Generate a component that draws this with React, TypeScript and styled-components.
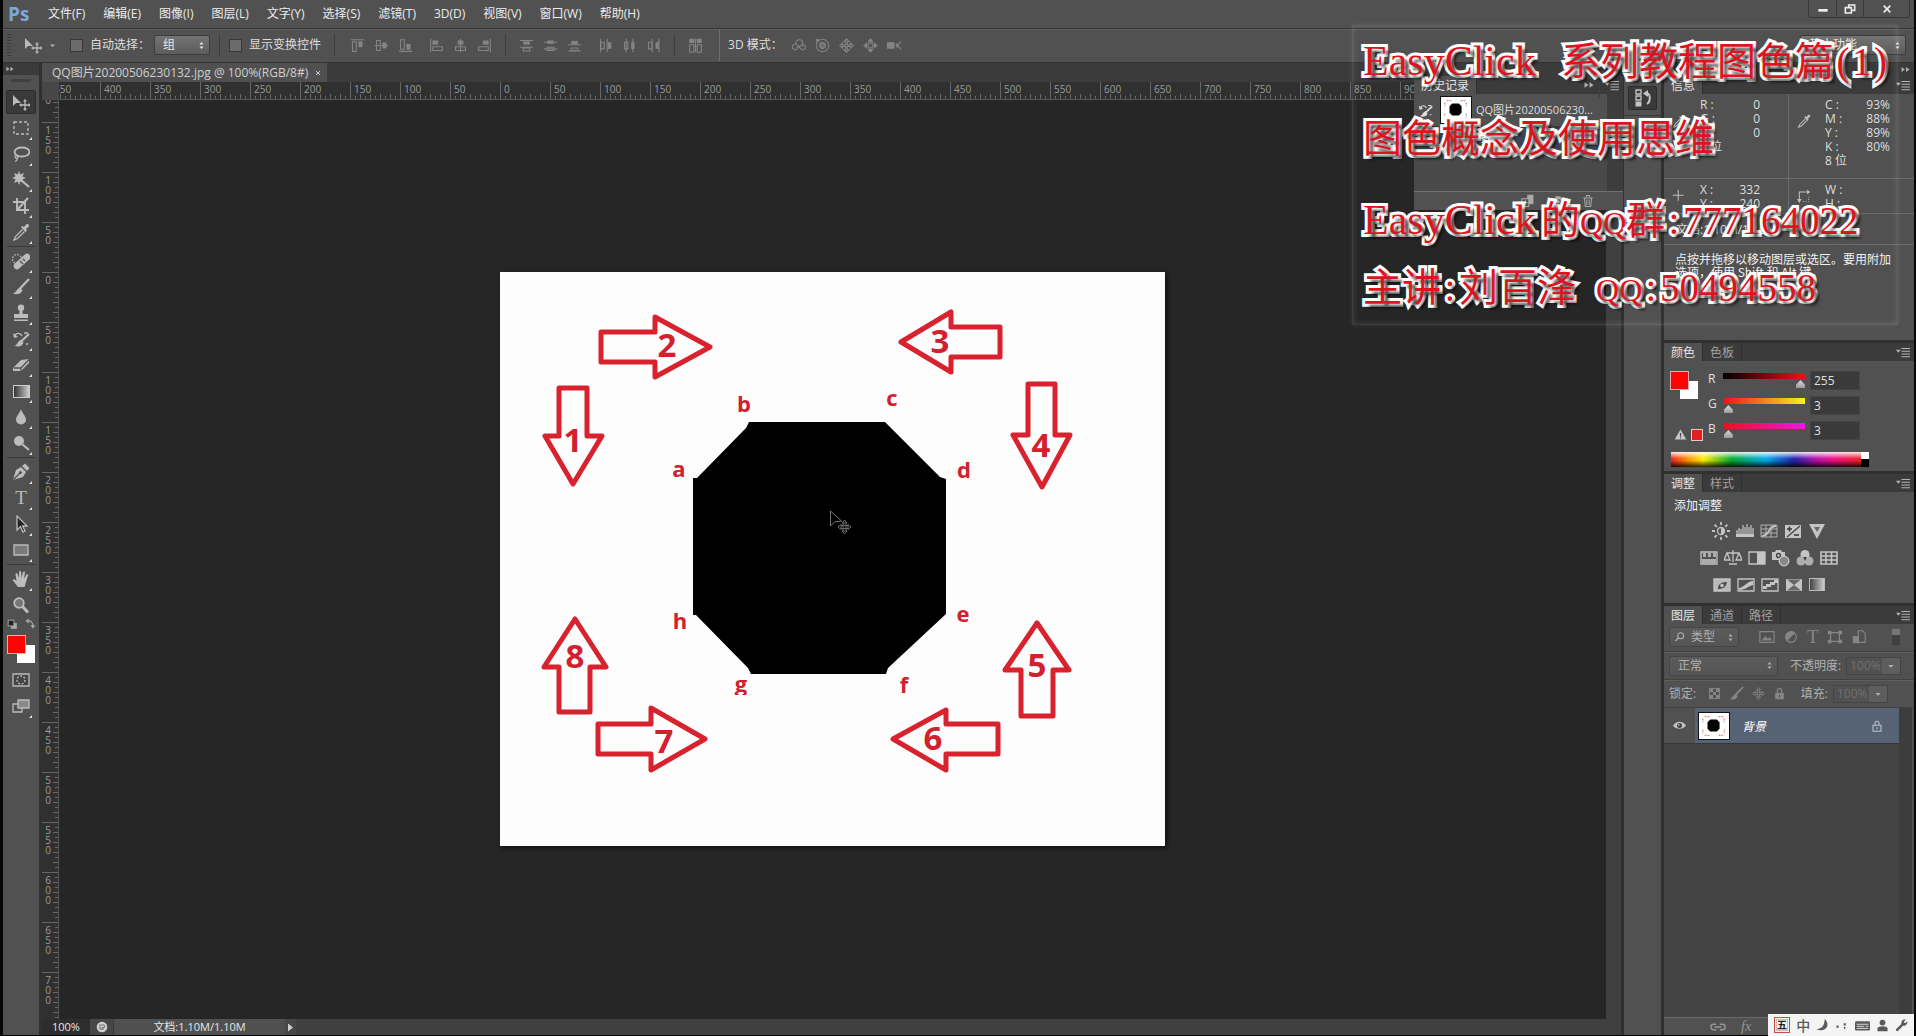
import React from "react";
import styled, { createGlobalStyle, css } from "styled-components";

const UI_FONT = '"Open Sans", "Noto Sans CJK SC", sans-serif';
const HINT_FONT = '"Noto Sans CJK SC", sans-serif';
const TITLE_FONT = '"Liberation Serif", "Noto Sans CJK SC", serif';

const c = {
  panel: "#515151",
  strip: "#3b3b3b",
  gap: "#303030",
  canvas: "#262626",
  text: "#dedede",
  red: "#ff0303",
};

const Global = createGlobalStyle`
  *, *::before, *::after { box-sizing: border-box; }
  body { margin: 0; background: #000; overflow: hidden; }
  button, input, select { font: inherit; color: inherit; margin: 0; padding: 0; border: 0; background: none; border-radius: 0; outline: none; }
`;

const Window = styled.div`
  display: flex;
  flex-direction: column;
  height: 100vh;
  border: solid #060606;
  border-width: 0 2px 1px 3px;
  background: ${c.gap};
  color: ${c.text};
  font: 12px/16px ${UI_FONT};
`;

/* ---------- icons ---------- */

const Glyph = styled.svg<{ $s?: number }>`
  display: block;
  flex: none;
  width: ${(p) => p.$s ?? 18}px;
  height: ${(p) => p.$s ?? 18}px;
  fill: none;
  stroke: currentColor;
  stroke-width: 1.3;
`;

const f = { fill: "currentColor", stroke: "none" };

const shapes: Record<string, React.ReactNode> = {
  move: (
    <>
      <path {...f} d="M1 2v11l3-3h5z" />
      <path d="M13 7.500v9M8.500 12h9" />
      <path {...f} d="M13 6l-2 2.500h4zM13 18l-2-2.500h4zM7 12l2.500-2v4zM19 12l-2.500-2v4z" />
    </>
  ),
  marquee: <path d="M2 3h14v12H2z" strokeDasharray="3 2" />,
  lasso: (
    <>
      <ellipse cx="10" cy="7" rx="7.500" ry="4.500" strokeWidth="1.800" />
      <path d="M4 10c-2 1-1 3.500 1 3s1-2.500-.5-2.500M5 13c.5 2-.5 3-2 3.500" />
    </>
  ),
  wand: (
    <>
      <path d="M9 9l8 7" strokeWidth="2.200" />
      <path {...f} d="M7 0l1.300 3.500L12 2l-1.500 3.500L14 7l-3.500 1.300L12 12 8.300 10.500 7 14 5.700 10.500 2 12l1.500-3.700L0 7l3.500-1.500L2 2l3.700 1.500z" />
    </>
  ),
  crop: <path d="M5 1v12h12M1 5h12v12M16 1L6 12" strokeWidth="1.900" />,
  dropper: (
    <>
      <path d="M10.500 6.500l-7 7L2 17l3.500-1.500 7-7" />
      <path {...f} d="M9 4l1.500-1 1.500 1 2-2.500c2-1.500 4 .5 2.500 2.500L14 6l1 1.500L13.500 9z" />
    </>
  ),
  heal: (
    <>
      <circle cx="5" cy="7" r="4.500" strokeDasharray="1.500 1.500" />
      <path d="M5 14l10-9" strokeWidth="6.500" strokeLinecap="round" />
      <path d="M8 9l3 3M11 7l2 2" stroke="#555" strokeWidth="1.500" />
    </>
  ),
  brush: (
    <>
      <path d="M17 1L8 10.500" strokeWidth="2.200" />
      <path {...f} d="M8 9.500l2.500 2.500c-1 4-5 5-10 3.500 4-.5 3.500-4.500 7.500-6z" />
    </>
  ),
  stamp: (
    <>
      <circle {...f} cx="9" cy="3.800" r="3.200" />
      <path {...f} d="M7.800 5h2.400l.5 5H16v4H2v-4h5.300zM2 15.500h14V17H2z" />
    </>
  ),
  history: (
    <>
      <path d="M17 4L9 11.500" strokeWidth="2.200" />
      <path {...f} d="M9 10l2.500 2.500c-1 4-5 4.500-9 3.500 3-1 3-5 6.500-6z" />
      <path d="M3 6c1-4 6-3 7 0M12 3h4M14 14h2" />
      <path {...f} d="M1 3l1 5 4-1z" />
    </>
  ),
  eraser: (
    <>
      <path {...f} d="M1 12l8-8 8-1v4l-8 8H1z" />
      <path d="M1.500 12H9l8-8.500M9 12v3" stroke="#555" />
    </>
  ),
  drop: <path {...f} d="M9 1c1 4 5 7 5 10.500a5 5 0 01-10 0C4 8 8 5 9 1z" />,
  dodge: (
    <>
      <circle {...f} cx="7" cy="7" r="5" />
      <path d="M10.500 10.500L17 16" strokeWidth="2.200" />
    </>
  ),
  pen: (
    <>
      <path {...f} d="M1 17l3-10 5-3 5 5-3 5z" />
      <path {...f} d="M10 3l3-2.500L17.500 5 15 8z" />
      <path d="M1.500 16.500L8 10" stroke="#515151" />
      <circle cx="8.500" cy="9.500" r="1.500" fill="#515151" stroke="none" />
    </>
  ),
  pointer: <path d="M5 1v14l3.500-3.500L11 17l2-1-2.300-5H15z" fill="#222" />,
  hand: (
    <path {...f} d="M6 17c-2-3-4-5-5.500-7 1-1.500 2.500-.5 4 1L3.500 4c.5-1.500 1.500-1 2 0L7 8V2c.5-1.500 2-1.500 2.200 0L9.500 8l1.500-6c.7-1 2-.7 2 .5L12 8.500l2.500-4c1-.8 2-.2 1.500 1L14 12l-1.500 5z" />
  ),
  zoom: (
    <>
      <circle cx="7" cy="7" r="4.800" fill="#777" strokeWidth="1.800" />
      <path d="M10.500 10.500L16 16.500" strokeWidth="3" />
    </>
  ),
  quick: (
    <>
      <path d="M1 3h16v12H1z" fill="#444" />
      <circle cx="9" cy="9" r="4" strokeDasharray="2 1.500" />
    </>
  ),
  screen: (
    <>
      <path d="M1 7h9v8H1z" />
      <path d="M6 3h11v8H6z" fill="#8a8a8a" />
    </>
  ),
  miniswatch: (
    <>
      <path {...f} d="M7 7h8v8H7z" />
      <path d="M3 3h8v8H3z" fill="#222" />
    </>
  ),
  swap: (
    <>
      <path d="M4 5c5-1 9 2 9 8" strokeWidth="2" />
      <path {...f} d="M6 1v8L1 5zM9 12h8l-4 5z" />
    </>
  ),
  alTop: (<><path d="M1 2h16M3 4.500h4.500V16H3z" /><path {...f} d="M10 4h5v7h-5z" /></>),
  alMid: (<><path d="M1 9h16M3 3h4.500v12H3z" /><path {...f} d="M10 5.500h5v7h-5z" /></>),
  alBot: (<><path d="M1 16h16M3 2h4.500v11.500H3z" /><path {...f} d="M10 7h5v7h-5z" /></>),
  alLeft: (<><path d="M2 1v16M4.500 10.500H16V15H4.500z" /><path {...f} d="M4 3h7v5H4z" /></>),
  alCen: (<><path d="M9 1v16M3 10.500h12V15H3z" /><path {...f} d="M5.500 3h7v5h-7z" /></>),
  alRight: (<><path d="M16 1v16M2 10.500h11.500V15H2z" /><path {...f} d="M7 3h7v5H7z" /></>),
  diTop: (<><path d="M1 3h16M1 11h16M5 12h8v3.500H5z" /><path {...f} d="M5 4h8v4H5z" /></>),
  diMid: (<><path d="M1 5h16M1 13h16M5 11h8v4H5z" /><path {...f} d="M5 3h8v4H5z" /></>),
  diBot: (<><path d="M1 8h16M1 15.500h16M5 12h8v3H5z" /><path {...f} d="M5 3.500h8V8H5z" /></>),
  diLeft: (<><path d="M3 1v16M11 1v16M3.500 5h4v8h-4z" /><path {...f} d="M12 5h4v8h-4z" /></>),
  diCen: (<><path d="M5 1v16M13 1v16M3 5h4v8H3z" /><path {...f} d="M11 5h4v8h-4z" /></>),
  diRight: (<><path d="M7.500 1v16M15.500 1v16M3 5h4v8H3z" /><path {...f} d="M11.500 5h4v8h-4z" /></>),
  arrange: (<><path d="M2 8h5v9H2zM11 8h5v9h-5zM9 1v16" /><path {...f} d="M1.500 1h6v5h-6zM10.500 1h6v5h-6z" /></>),
  orbit: (<><circle cx="10" cy="6" r="4" /><path d="M6 7c-6 1-6 7 0 7l3-4c3 5 7 5 8 2s-1-4-4-4" /></>),
  roll: (<><circle cx="9" cy="9" r="7.500" /><circle cx="9" cy="9" r="3.500" fill="#707070" /><path {...f} d="M1 1l5 1-4 4z" /></>),
  pan: <path d="M9 1l3 3h-2v4h4V6l3 3-3 3v-2h-4v4h2l-3 3-3-3h2v-4H4v2L1 9l3-3v2h4V4H6z" />,
  slide: (<><path {...f} d="M9 0l4 5H5zM0 9l5-4v8zM18 9l-5-4v8zM9 18l-4-5h8z" /><circle cx="9" cy="9" r="3" /></>),
  camera: (<><path {...f} d="M0 5h9v8H0zM10 9l3-4v8z" /><path d="M17 4l-4 5 4 5" /></>),
  snap: (<><path {...f} d="M1 5h4l1-2h6l1 2h4v10H1z" /><circle cx="9" cy="10" r="3" stroke="#555" /></>),
  trash: <path d="M3 5h12M7 4V2h4v2M4.500 5l1 11h7l1-11M7.500 7v7M10.500 7v7" />,
  newdoc: (<><path {...f} d="M8 1h8v12H8z" /><path d="M1 6h9v10H1z" fill="#555" /><path d="M3 11h5M5.500 8.500v5" stroke="#ddd" /></>),
  histPanel: (<><path d="M2 1h5v4H2zM2 7h5v4H2z" /><path {...f} d="M1.500 12.500h6v5h-6z" /><path d="M11 4c6-1 6 8 2 11" strokeWidth="2" /><path {...f} d="M14 1v7L9 4.500z" /></>),
  cross: <path d="M8 1v14M1 8h14" />,
  dims: (<><path d="M3 17V4h10" /><path {...f} d="M13 1l4 3-4 3zM0 13h6l-3 5z" /><path d="M8 16h7V9" strokeDasharray="1 2" /></>),
  sun: (<><circle cx="9" cy="9" r="3.500" /><path {...f} d="M9 5.500a3.500 3.500 0 010 7z" /><path d="M9 0v3M9 15v3M0 9h3M15 9h3M2.600 2.600l2.200 2.200M13.200 13.200l2.200 2.200M2.600 15.400l2.200-2.200M13.200 4.800l2.200-2.200" strokeWidth="1.800" /></>),
  levels: (<><path {...f} d="M0 12h18v3H0z" /><path d="M1 13V8M3 13V6M5 13V7M7 13V3M9 13V5M11 13V2M13 13V5M15 13V3M17 13V6" strokeWidth="1.200" /></>),
  curves: (<><path d="M1 3h16v12H1zM6 3v12M11 3v12M1 7h16M1 11h16" strokeWidth=".8" /><path d="M2 14c8 0 6-10 14-10" strokeWidth="1.800" /></>),
  exposure: (<><path {...f} d="M1 3h16v13H1z" /><path d="M16 4L3 15" stroke="#444" /><path d="M3 7h5M5.500 4.500v5M10 13h5" stroke="#333" /></>),
  vibrance: (<><path {...f} d="M1 2h16L9 17z" /><path d="M6 5h6l-3 5z" fill="#666" stroke="none" /></>),
  hue: (<><path d="M1 3h16v12H1z" /><path {...f} d="M3 4h3v4H3zM8 4h3v4H8zM13 4h3v4h-3zM2 10h14v4H2z" opacity=".8" /></>),
  balance: <path d="M9 1v12M5 15h8M3 4h12M3 4L0 11h6zM15 4l-3 7h6z" />,
  bw: (<><path d="M1 3h16v12H1z" /><path {...f} d="M9 3h8v12H9z" /></>),
  photo: (<><path {...f} d="M0 3h3l1-2h5l1 2h3v8H0z" /><circle cx="6.500" cy="6.500" r="2" stroke="#444" /><circle cx="12" cy="12" r="4.800" fill="#888" /></>),
  mixer: (<><circle {...f} cx="9" cy="5.500" r="4.500" /><circle {...f} cx="5" cy="12" r="4.500" opacity=".8" /><circle {...f} cx="13" cy="12" r="4.500" opacity=".8" /><path d="M7 8h4l-2 4z" fill="#444" stroke="none" /></>),
  lookup: <path d="M1 3h16v12H1zM6 3v12M11.500 3v12M1 7h16M1 11h16" strokeWidth="1.600" />,
  invert: (<><path d="M1 3h16v12H1z" fill="#b8b8b8" /><path d="M5 13c0-5 3-7 9-7-1 5-4 7-9 7z" fill="#4a4a4a" stroke="none" /><circle cx="9" cy="9.500" r="1.800" fill="#c4c4c4" stroke="none" /></>),
  poster: (<><path d="M1 3h16v12H1z" /><path {...f} d="M2 12C8 11 10 5 16 5v4c-5 1-7 5-14 5z" /></>),
  thresh: (<><path d="M1 3h16v12H1z" /><path {...f} d="M2 13v-3h3V8h4V6h4V4h4v3h-3v2h-4v2H6v2z" /></>),
  selcol: (<><path {...f} d="M1 3h16v12H1z" /><path d="M2 3.500l7 5.500 7-5.500zM2 14.500L9 9l7 5.500z" fill="#666" stroke="none" /></>),
  image: (<><path d="M1 3h16v12H1z" /><path {...f} d="M3 13l4-5 3 3 2-2 3 4z" /></>),
  half: (<><circle cx="9" cy="9" r="6" /><path {...f} d="M4.500 13.500a6 6 0 019-9z" /></>),
  shape: (<><path d="M4 4h10v10H4z" /><path {...f} d="M1 2h4v4H1zM13 2h4v4h-4zM1 12h4v4H1zM13 12h4v4h-4z" /></>),
  smart: (<><path d="M8 2h5l3 3v10H8z" /><path {...f} d="M2 8h7v8H2z" /></>),
  check: (<><path d="M2 2h14v14H2z" /><path {...f} d="M2 2h5v5H2zM11 2h5v5h-5zM7 7h4v4H7zM2 11h5v5H2zM11 11h5v5h-5z" /></>),
  lock: (<><path {...f} d="M3 8h12v9H3z" /><path d="M6 8V5c0-4 6-4 6 0v3" strokeWidth="1.800" /><path d="M9 11v3" stroke="#444" /></>),
  lockLine: (<path d="M3 8h12v9H3zM6 8V5c0-4 6-4 6 0v3M9 11v3" strokeWidth="1.600" />),
  eye: (<><path {...f} d="M0 9c4-7 14-7 18 0-4 6-14 6-18 0z" /><circle cx="9" cy="9" r="3.500" fill="#444" stroke="none" /><circle {...f} cx="8" cy="8" r="1.200" /></>),
  search: (<><circle cx="10" cy="7" r="4.500" strokeWidth="1.600" /><path d="M6.500 10.500L2 15" strokeWidth="1.800" /></>),
  link: <path d="M7 6H4a3 3 0 000 6h3M11 6h3a3 3 0 010 6h-3M5 9h8" strokeWidth="1.600" />,
  warn: (<><path {...f} d="M9 2l8 14H1z" /><path d="M9 7v5M9 13v1.500" stroke="#444" strokeWidth="1.600" /></>),
  updown: <path {...f} d="M9 2l4 5H5zM9 16l4-5H5z" />,
  down: <path {...f} d="M4 7h10l-5 5z" />,
  ff: <path {...f} d="M1 4l7 5-7 5zM10 4l7 5-7 5z" />,
  menu: (<><path {...f} d="M0 6h6L3 10z" /><path d="M7 4.500h11M7 8h11M7 11.500h11M7 15h11" /></>),
  min: <path d="M2 11h14" strokeWidth="4" />,
  restore: <path d="M7 6V3h9v8h-4M2 7h9v8H2z" strokeWidth="2.400" />,
  close: <path d="M3 3l12 12M15 3L3 15" strokeWidth="3" />,
  moon: <path {...f} d="M12 0c9 8 1 20-12 14 9 0 12-6 12-14z" />,
  dots: <path {...f} d="M2 9h3v3H2zM12 6h3v3h-3zM12 11h3l-2 4z" />,
  keyboard: (<><rect {...f} x="0" y="4" width="18" height="11" rx="1.500" /><path d="M2 7.500h14M2 10h9M13 10h3M2 12.500h14" stroke="#eee" strokeWidth="1" /></>),
  person: (<><circle {...f} cx="9" cy="5" r="4" /><path {...f} d="M2 17v-4c0-4 14-4 14 0v4z" /></>),
  wrench: (<><path d="M3 15l8-8" strokeWidth="3.500" strokeLinecap="round" /><path {...f} d="M9 7c-1-4 2-7 6-6l-3 3 2 2 3-3c1 4-3 7-6 6z" /></>),
  status: (<><circle {...f} cx="9" cy="9" r="8" /><path d="M6 5v7h6M8 6h3c3 0 3 4 0 4H9" stroke="#555" /></>),
  play: <path {...f} d="M4 1l10 8-10 8z" />,
  rect: <path d="M2 4h14v10H2z" fill="#7a7a7a" />,
};

const Icon = ({ n, s }: { n: string; s?: number }) => (
  <Glyph viewBox="0 0 18 18" $s={s} aria-hidden="true">
    {shapes[n]}
  </Glyph>
);

/* ---------- menu bar ---------- */

const MenuBar = styled.header`
  display: flex;
  align-items: center;
  height: 29px;
  flex: none;
  background: ${c.panel};
  border-bottom: 1px solid #333;
`;
const Logo = styled.div`
  width: 45px;
  padding-left: 5px;
  color: #7ba7d9;
  font: bold 19px/26px "Open Sans", sans-serif;
`;
const Menus = styled.nav`
  display: flex;
  gap: 18px;
  flex: 1;
`;
const MenuItem = styled.button`
  color: #ececec;
  white-space: nowrap;
`;
const Caption = styled.div`
  display: flex;
  align-self: flex-start;
  height: 18px;
  margin-right: 4px;
  border: 1px solid #3a3a3a;
  border-top: 0;
  border-radius: 0 0 3px 3px;
`;
const CaptionButton = styled.button<{ $wide?: boolean }>`
  display: grid;
  place-items: center;
  width: ${(p) => (p.$wide ? 46 : 27)}px;
  color: #eee;
  & + & {
    border-left: 1px solid #3a3a3a;
  }
`;

/* ---------- options bar ---------- */

const OptionsBar = styled.div`
  display: flex;
  align-items: center;
  height: 34px;
  flex: none;
  padding: 0 8px 2px 4px;
  background: ${c.panel};
  border-top: 1px solid #606060;
  border-bottom: 1px solid #333;
`;
const Grip = styled.div`
  width: 4px;
  height: 22px;
  background: repeating-linear-gradient(#3a3a3a 0 1px, transparent 1px 3px);
`;
const ToolPreset = styled.button`
  display: flex;
  align-items: center;
  gap: 6px;
  width: 53px;
  margin-right: 2px;
  padding-left: 13px;
  color: #b8b8b8;
`;
const Divider = styled.div<{ $full?: boolean }>`
  width: 1px;
  height: ${(p) => (p.$full ? 32 : 22)}px;
  margin: 0 ${(p) => (p.$full ? 8 : 5)}px;
  background: ${(p) => (p.$full ? "#6e6e6e" : "#3e3e3e")};
`;
const CheckLabel = styled.label`
  display: flex;
  align-items: center;
  gap: 7px;
  margin: 0 4px;
  white-space: nowrap;
`;
const Check = styled.input`
  appearance: none;
  width: 13px;
  height: 13px;
  border: 1px solid #383838;
  background: #6b6b6b;
`;
const SelectBox = styled.span<{ $w: number; $dim?: boolean }>`
  display: grid;
  flex: none;
  align-items: center;
  width: ${(p) => p.$w}px;
  height: 20px;
  border: 1px solid ${(p) => (p.$dim ? "#454545" : "#3c3c3c")};
  border-radius: 2px;
  background: linear-gradient(${(p) => (p.$dim ? "#5c5c5c, #545454" : "#747474, #5c5c5c")});
  color: ${(p) => (p.$dim ? "#b0b0b0" : "#e8e8e8")};
  > * {
    grid-area: 1 / 1;
  }
  > svg:first-child {
    margin-left: 4px;
  }
  > svg:last-child {
    justify-self: end;
    margin-right: 3px;
    pointer-events: none;
  }
`;
const Select = styled.select<{ $pad?: number }>`
  appearance: none;
  width: 100%;
  height: 18px;
  padding-left: ${(p) => p.$pad ?? 8}px;
`;
const Drop = ({ w, label, value, dim, pad, icon }: { w: number; label: string; value: string; dim?: boolean; pad?: number; icon?: string }) => (
  <SelectBox $w={w} $dim={dim}>
    {icon && <Icon n={icon} s={12} />}
    <Select aria-label={label} $pad={pad}>
      <option>{value}</option>
    </Select>
    <Icon n="updown" s={9} />
  </SelectBox>
);
const IconGroup = styled.div`
  display: flex;
  align-items: center;
  gap: 9px;
  margin: 0 8px;
  color: #848484;
`;
const EyeCell = styled.div`
  display: grid;
  place-items: center;
`;
const IconButton = styled.button`
  display: grid;
  place-items: center;
`;
const Spacer = styled.div<{ $w?: number }>`
  flex: ${(p) => (p.$w ? `0 0 ${p.$w}px` : "1")};
`;

/* ---------- workspace ---------- */

const Workspace = styled.main`
  display: flex;
  gap: 3px;
  flex: 1;
  min-height: 0;
`;
const Tools = styled.aside`
  display: flex;
  flex-direction: column;
  align-items: center;
  width: 36px;
  background: ${c.panel};
`;
const ToolsHead = styled.div`
  align-self: stretch;
  height: 12px;
  padding: 2px 3px;
  background: ${c.strip};
  color: #b0b0b0;
`;
const ToolsGrip = styled.div`
  width: 20px;
  height: 3px;
  margin: 4px 0 7px;
  background: #404040;
`;
const Tool = styled.button<{ $on?: boolean }>`
  display: grid;
  flex: none;
  place-items: center;
  position: relative;
  width: 30px;
  height: 24px;
  margin: 1px 0;
  color: #bcbcbc;
  ${(p) =>
    p.$on &&
    css`
      background: #3a3a3a;
      border: 1px solid #2c2c2c;
      border-radius: 2px;
    `}
`;
const Corner = styled.i`
  position: absolute;
  right: 4px;
  bottom: 0;
  border: solid transparent;
  border-width: 0 0 3px 3px;
  border-bottom-color: #e0e0e0;
`;
const ToolRule = styled.div`
  width: 28px;
  height: 1px;
  margin: 1px 0;
  background: #3a3a3a;
`;
const GradientChip = styled.i`
  width: 17px;
  height: 13px;
  border: 1px solid #ccc;
  background: linear-gradient(90deg, #333, #ccc);
`;
const TypeChip = styled.b`
  font: 19px/20px "Liberation Serif", serif;
`;
const MiniRow = styled.div`
  display: flex;
  justify-content: space-between;
  width: 30px;
  height: 14px;
  margin: 0 0 3px;
  color: #aaa;
`;
const Swatches = styled.div`
  display: grid;
  grid-template-columns: 10px 9px 9px;
  grid-template-rows: 10px 9px 9px;
  flex: none;
  margin-bottom: 4px;
`;
const Front = styled.button`
  grid-area: 1 / 1 / 3 / 3;
  z-index: 1;
  background: ${c.red};
  border: 1px solid #d8b0b0;
`;
const Back = styled.button`
  grid-area: 2 / 2 / 4 / 4;
  background: #fff;
`;

/* ---------- document ---------- */

const Doc = styled.section`
  display: flex;
  flex-direction: column;
  flex: 1;
  min-width: 0;
  position: relative;
`;
const TabStrip = styled.div`
  display: flex;
  height: 19px;
  background: ${c.strip};
`;
const DocTab = styled.div`
  display: flex;
  align-items: center;
  gap: 7px;
  padding: 0 6px 0 10px;
  background: #505050;
  color: #cfcfcf;
  white-space: nowrap;
`;
const DocBody = styled.div`
  display: grid;
  grid-template: 18px minmax(0, 1fr) / 17px minmax(0, 1fr) 15px;
  flex: 1;
  min-height: 0;
`;
const RulerCorner = styled.div`
  background: #474747;
`;
const RulerX = styled.div`
  display: flex;
  overflow: hidden;
  background: #303030;
  border-bottom: 1px solid #555;
`;
const StepX = styled.span`
  flex: none;
  width: 50px;
  padding-left: 3px;
  border-left: 1px solid #666;
  color: #9c9c9c;
  font: 10px/15px ${UI_FONT};
  background:
    repeating-linear-gradient(90deg, transparent 0 4px, #666 4px 5px) 0 100% / 100% 3px no-repeat,
    repeating-linear-gradient(90deg, transparent 0 9px, #666 9px 10px) 0 100% / 100% 5px no-repeat;
  &:first-child {
    margin-left: -9px;
  }
`;
const RulerY = styled.div`
  overflow: hidden;
  background: #303030;
  border-right: 1px solid #555;
`;
const StepY = styled.span`
  display: block;
  width: 16px;
  height: 50px;
  padding: 2px 7px 0 3px;
  border-top: 1px solid #666;
  color: #9c9c9c;
  font: 10px/10px ${UI_FONT};
  word-break: break-all;
  text-align: center;
  background:
    repeating-linear-gradient(transparent 0 4px, #666 4px 5px) 100% 0 / 3px 100% no-repeat,
    repeating-linear-gradient(transparent 0 9px, #666 9px 10px) 100% 0 / 5px 100% no-repeat;
  &:first-child {
    margin-top: -28px;
  }
`;
const ScrollStrip = styled.div`
  background: #404040;
  grid-row: 1 / 3;
  grid-column: 3;
`;
const Pasteboard = styled.div`
  display: grid;
  place-items: center;
  overflow: hidden;
  padding-bottom: 2px;
  background: ${c.canvas};
`;
const Artwork = styled.svg`
  display: block;
  width: 665px;
  height: 574px;
  background: #fdfdfd;
  box-shadow: 2px 2px 4px #111;
`;
const StatusBar = styled.footer`
  display: flex;
  height: 16px;
  background: #404040;
  color: #e6e6e6;
  font: 11px/16px ${UI_FONT};
`;
const ZoomField = styled.input`
  width: 48px;
  padding-left: 10px;
  background: #2d2d2d;
`;
const StatusButton = styled.button<{ $w: number }>`
  display: grid;
  place-items: center;
  width: ${(p) => p.$w}px;
  background: #474747;
  color: #d0d0d0;
`;
const DocSize = styled.div`
  width: 172px;
  text-align: center;
  background: #505050;
  border-left: 1px solid #3a3a3a;
`;

/* ---------- panels ---------- */

const Dock = styled.aside`
  width: 37px;
  background: ${c.panel};
`;
const DockHead = styled.div`
  display: flex;
  justify-content: flex-end;
  height: 13px;
  padding: 2px 4px;
  background: ${c.strip};
  color: #b0b0b0;
`;
const DockButton = styled.button`
  display: grid;
  place-items: center;
  width: 29px;
  height: 24px;
  margin: 10px 4px 5px;
  background: #3a3a3a;
  border: 1px solid #2c2c2c;
  border-radius: 2px;
  color: #c4c4c4;
`;
const DockRule = styled.div`
  height: 1px;
  background: #3a3a3a;
`;
const Panels = styled.aside`
  display: flex;
  flex-direction: column;
  width: 250px;
  background: #3c3c3c;
`;
const Panel = styled.section<{ $h?: number }>`
  display: flex;
  flex-direction: column;
  height: ${(p) => (p.$h ? p.$h + "px" : "auto")};
  flex: ${(p) => (p.$h ? "none" : 1)};
  min-height: 0;
  background: ${c.panel};
  border-bottom: ${(p) => (p.$h ? 3 : 0)}px solid ${c.gap};
`;
const Tabs = styled.div`
  display: flex;
  align-items: stretch;
  flex: none;
  height: 18px;
  padding-right: 4px;
  background: ${c.strip};
  color: #b4b4b4;
`;
const Tab = styled.button<{ $on?: boolean }>`
  padding: 0 7px;
  line-height: 17px;
  border-right: 1px solid #2f2f2f;
  color: ${(p) => (p.$on ? "#e6e6e6" : "#a0a0a0")};
  background: ${(p) => (p.$on ? c.panel : "transparent")};
`;
const TabBar = ({ names, ff }: { names: string[]; ff?: boolean }) => (
  <Tabs>
    {names.map((n, i) => (
      <Tab key={n} $on={i === 0}>
        {n}
      </Tab>
    ))}
    <Spacer />
    {ff && (
      <IconButton aria-label="折叠">
        <Icon n="ff" s={10} />
      </IconButton>
    )}
    {ff && <Divider />}
    <IconButton aria-label="面板菜单">
      <Icon n="menu" s={14} />
    </IconButton>
  </Tabs>
);

const InfoGrid = styled.div<{ $h: number; $icon: number }>`
  display: grid;
  grid-template-columns: 124px 1fr;
  height: ${(p) => p.$h}px;
  border-bottom: 1px solid #6a6a6a;
  svg {
    margin-top: ${(p) => p.$icon}px;
  }
`;
const InfoCell = styled.div`
  display: grid;
  grid-template-columns: 28px 1fr;
  align-items: start;
  padding: 0 28px 0 8px;
  color: #c0c0c0;
  & + & {
    border-left: 1px solid #6a6a6a;
    padding-right: 24px;
  }
`;
const Readings = styled.dl`
  display: grid;
  grid-template-columns: 22px 1fr;
  margin: 4px 0 0;
  font: 12px/14px ${UI_FONT};
  color: #dedede;
`;
const Key = styled.dt`
  white-space: pre;
`;
const Val = styled.dd`
  margin: 0;
  text-align: right;
`;
const Depth = styled.dt`
  grid-row: 5;
  grid-column: 1 / 3;
`;
const Readout = ({ rows, depth }: { rows: [string, string][]; depth?: string }) => (
  <Readings>
    {rows.map(([k, v]) => (
      <React.Fragment key={k}>
        <Key>{k} :</Key>
        <Val>{v}</Val>
      </React.Fragment>
    ))}
    {depth && <Depth>{depth}</Depth>}
  </Readings>
);
const InfoLine = styled.p`
  margin: 0;
  padding: 8px 12px 6px;
  border-bottom: 1px solid #6a6a6a;
  white-space: nowrap;
`;
const Hint = styled.p`
  margin: 0;
  padding: 7px 20px 0 11px;
  color: #f0f0f0;
  font: 12px/13px ${HINT_FONT};
`;

const ColorBody = styled.div`
  display: grid;
  grid-template-columns: 38px 1fr;
  padding: 10px 6px 0;
`;
const SwatchCol = styled.div`
  display: flex;
  flex-direction: column;
  justify-content: space-between;
  height: 70px;
`;
const GamutRow = styled.div`
  display: flex;
  align-items: center;
  gap: 4px;
  padding-left: 4px;
  color: #c8c8c8;
`;
const Gamut = styled.i`
  width: 12px;
  height: 12px;
  background: #e61e1e;
  border: 1px solid #e8c8c8;
`;
const Channel = styled.div`
  display: grid;
  grid-template-columns: 10px 82px 50px;
  gap: 0 5px;
  height: 25px;
  color: #e0e0e0;
`;
const Slider = styled.input<{ $from: string; $to: string }>`
  appearance: none;
  width: 82px;
  height: 18px;
  &::-webkit-slider-runnable-track {
    height: 18px;
    border: 0;
    background: linear-gradient(90deg, ${(p) => p.$from}, ${(p) => p.$to}) 0 2px / 100% 6px no-repeat;
  }
  &::-webkit-slider-thumb {
    appearance: none;
    width: 9px;
    height: 8px;
    margin-top: 9px;
    background: linear-gradient(#ddd, #999);
    clip-path: polygon(50% 0, 100% 60%, 100% 100%, 0 100%, 0 60%);
  }
`;
const Amount = styled.input`
  width: 50px;
  height: 19px;
  padding-left: 3px;
  background: #3a3a3a;
  border: 1px solid #444;
`;
const Spectrum = styled.div`
  display: grid;
  grid-template: 7px 8px / 190px 8px;
  margin: 6px 7px 0;
`;
const Hues = styled.div`
  grid-row: 1 / 3;
  background:
    linear-gradient(rgba(255, 255, 255, 0.9), transparent 45%, transparent 55%, rgba(0, 0, 0, 0.85)),
    linear-gradient(90deg, #e22, #f80 8%, #fe0 17%, #0a3 32%, #0ae 50%, #22a 65%, #a1a 75%, #e18 85%, #e22);
`;
const White = styled.i`
  background: #fff;
`;
const Black = styled.i`
  background: #000;
`;

const AdjustTitle = styled.h3`
  margin: 4px 10px 3px;
  font: 12px/18px ${HINT_FONT};
  color: #f4f4f4;
`;
const AdjustRow = styled.div`
  display: flex;
  justify-content: center;
  gap: 6px;
  width: 210px;
  height: 27px;
  align-items: center;
  color: #c4c4c4;
`;
const Chip = styled.i`
  width: 16px;
  height: 13px;
  border: 1px solid #bbb;
  background: linear-gradient(90deg, #444, #ccc);
`;

const LayerRow = styled.div`
  display: flex;
  align-items: center;
  flex: none;
  height: 28px;
  padding: 0 26px 1px 5px;
  gap: 6px;
  color: #b0b0b0;
  border-bottom: 1px solid #414141;
  & + & {
    border-top: 1px solid #5e5e5e;
  }
  white-space: nowrap;
`;
const LayerIcons = styled.div<{ $gap: number; $pad: number }>`
  display: flex;
  align-items: center;
  gap: ${(p) => p.$gap}px;
  padding-left: ${(p) => p.$pad}px;
  color: #868686;
`;
const Toggle = styled.button`
  width: 8px;
  height: 16px;
  margin-right: -12px;
  background: linear-gradient(#777 40%, #3f3f3f 40%);
`;
const FieldLabel = styled.label`
  display: flex;
  align-items: center;
  gap: 5px;
`;
const Combo = styled.span`
  display: flex;
  height: 18px;
  border: 1px solid #444;
`;
const ComboInput = styled.input`
  width: 35px;
  padding-left: 3px;
  color: #707070;
`;
const ComboButton = styled.button`
  display: grid;
  place-items: center;
  width: 18px;
  background: #5e5e5e;
`;
const Percent = ({ label }: { label: string }) => (
  <FieldLabel>
    {label}
    <Combo>
      <ComboInput defaultValue="100%" />
      <ComboButton aria-label="展开">
        <Icon n="down" s={10} />
      </ComboButton>
    </Combo>
  </FieldLabel>
);
const LayerList = styled.div`
  flex: 1;
  margin-right: 2px;
  border-right: 13px solid #3d3d3d;
  background: #444;
`;
const Layer = styled.div`
  display: grid;
  grid-template-columns: 31px 33px 1fr 18px;
  align-items: center;
  height: 36px;
  padding-right: 10px;
  background: linear-gradient(90deg, ${c.panel} 31px, #566375 31px);
  border-bottom: 1px solid #363636;
  color: #c0c4ca;
`;
const Thumb = styled.svg`
  display: block;
  flex: none;
  width: 32px;
  height: 28px;
  margin-left: 3px;
  border: 1px solid #111;
  background: #fff;
`;
const LayerName = styled.span`
  padding-left: 14px;
  color: #fff;
  font: italic 12px/18px ${HINT_FONT};
`;
const PanelFoot = styled.div`
  display: flex;
  align-items: center;
  gap: 15px;
  flex: none;
  height: 18px;
  padding-left: 46px;
  background: ${c.panel};
  border-top: 1px solid #6a6a6a;
  color: #969696;
`;
const Fx = styled.i`
  font: italic 14px/16px "Liberation Serif", serif;
`;

/* ---------- floating history panel ---------- */

const Floating = styled.section`
  position: absolute;
  top: 13px;
  right: -2px;
  width: 209px;
  background: ${c.panel};
`;
const HistoryBody = styled.div`
  height: 97px;
  background: #494949;
  border-right: 16px solid #3d3d3d;
`;
const Snapshot = styled.div`
  display: flex;
  align-items: center;
  gap: 4px;
  height: 34px;
  padding-left: 4px;
  background: ${c.panel};
  border-bottom: 2px solid #3a3a3a;
  white-space: nowrap;
  color: #ddd;
  font-size: 11px;
`;
const HistoryState = styled.div`
  height: 22px;
  padding: 2px 0 0 66px;
  background: #3c4658;
  color: #fff;
`;
const HistoryFoot = styled.div`
  display: flex;
  align-items: center;
  justify-content: flex-end;
  gap: 16px;
  height: 19px;
  padding-right: 28px;
  border-top: 1px solid #707070;
  color: #aaa;
`;

/* ---------- caption overlay and input method bar ---------- */

const Titles = styled.div`
  position: absolute;
  top: 25px;
  right: 18px;
  width: 546px;
  height: 300px;
  padding: 11px 0 0 10px;
  border: 1px solid rgba(255, 255, 255, 0.1);
  box-shadow: inset 0 0 6px rgba(255, 255, 255, 0.14), 0 0 4px rgba(255, 255, 255, 0.1);
  pointer-events: none;
`;
const TitleLine = styled.p<{ $before?: number }>`
  display: flex;
  align-items: baseline;
  margin: ${(p) => p.$before ?? 0}px 0 0;
  height: 48px;
  color: #dc1420;
  font: 39px/48px ${TITLE_FONT};
  white-space: pre;
  -webkit-text-stroke: 6px #fff;
  paint-order: stroke fill;
  stroke-linejoin: round;
  text-shadow: 4px 4px 3px rgba(0, 0, 0, 0.75);
`;
const Word = styled.span`
  width: 178px;
  font-size: 42px;
`;
const Short = styled.span`
  width: 44px;
  margin-right: 2px;
  font-size: 32px;
  text-align: center;
`;
const Colon = styled.span`
  width: 18px;
  text-align: center;
`;
const Gap = styled.span`
  width: 20px;
`;

const Ime = styled.div`
  position: absolute;
  right: 2px;
  bottom: 0;
  display: flex;
  align-items: center;
  justify-content: space-between;
  width: 146px;
  height: 22px;
  padding: 0 6px;
  background: #f4f4f4;
  color: #5a5a5a;
`;
const ImeMode = styled.button`
  width: 16px;
  height: 16px;
  border: 1px solid #c0504a;
  outline: 1px solid #e8b0ac;
  outline-offset: -3px;
  color: #222;
  font: bold 10px/14px ${HINT_FONT};
`;
const ImeLang = styled.button`
  font: 500 14px/18px ${HINT_FONT};
`;

const menus = ["文件(F)", "编辑(E)", "图像(I)", "图层(L)", "文字(Y)", "选择(S)", "滤镜(T)", "3D(D)", "视图(V)", "窗口(W)", "帮助(H)"];

const toolGroups: string[][] = [
  ["move", "marquee", "lasso", "wand", "crop", "dropper"],
  ["heal", "brush", "stamp", "history", "eraser", "gradient", "drop", "dodge"],
  ["pen", "type", "pointer", "rect"],
  ["hand", "zoom"],
];

const arrows = [
  "M559 388H587V436H602L573 484 545 436H559Z",
  "M601 332H655V317L710 347 655 377V362H601Z",
  "M901 342L951 312V327H1000V357H951V372Z",
  "M1028 384H1055V435H1070L1042 487 1013 435H1028Z",
  "M1037 623L1069 670H1053V716H1021V670H1005Z",
  "M893 739L946 710V724H998V754H946V770Z",
  "M598 724H651V708L705 739 651 770V754H598Z",
  "M575 619L606 667H590V712H559V667H544Z",
];
const numbers: [string, number, number][] = [
  ["1", 573, 452], ["2", 667, 357], ["3", 940, 353], ["4", 1041, 457],
  ["5", 1037, 677], ["6", 933, 750], ["7", 664, 753], ["8", 575, 668],
];
const letters: [string, number, number][] = [
  ["a", 679, 477], ["b", 744, 412], ["c", 892, 406], ["d", 964, 478],
  ["e", 963, 622], ["f", 904, 693], ["g", 741, 692], ["h", 680, 629],
];

const Marks = styled.g<{ $size: number }>`
  font: bold ${(p) => p.$size}px "Open Sans", sans-serif;
  fill: #d2202e;
  text-anchor: middle;
`;

const Drawing = () => (
  <Artwork viewBox="500 272 665 574" role="img" aria-label="八边形">
    <path d="M693 478h4L746 428l3-6H885L940 477l6 2V614L888 668l-2 6H751l-3-6L696 615h-3Z" fill="#000" />
    {arrows.map((d) => (
      <path key={d} d={d} fill="none" stroke="#d8222e" strokeWidth="5" strokeLinejoin="round" />
    ))}
    <Marks $size={33}>
      {numbers.map(([t, x, y]) => (
        <text key={t} x={x} y={y}>{t}</text>
      ))}
    </Marks>
    <Marks $size={22}>
      {letters.map(([t, x, y]) => (
        <text key={t} x={x} y={y}>{t}</text>
      ))}
    </Marks>
    <rect x="730" y="695" width="22" height="8" fill="#fdfdfd" />
    <path d="M830.500 511v15l4-4 7-1z" fill="#000" stroke="#777" />
    <path d="M844.500 520l2.500 3h-5zM844.500 534l2.500-3h-5zM838 527l3-2.500v5zM851 527l-3-2.500v5zM841 525.500h7M841 528.500h7M843 523v8M846 523v8" fill="none" stroke="#777" strokeWidth=".9" />
  </Artwork>
);

const MiniArt = () => (
  <Thumb viewBox="0 0 32 28">
    <path d="M12 7h7l3 3v7l-3 3h-7l-3-3v-7z" />
    <path d="M4 6v4M6 4h5M21 4h5M27 6v4M4 18v4M6 24h5M21 24h5M27 18v4" stroke="#c66" fill="none" strokeDasharray="2 1" />
  </Thumb>
);

const steps = (from: number, to: number) => Array.from({ length: (to - from) / 50 + 1 }, (_, i) => from + i * 50);

const IconRun = ({ names }: { names: string[] }) => (
  <IconGroup>
    {names.map((n) => (
      <IconButton key={n} aria-label={n}>
        <Icon n={n} s={15} />
      </IconButton>
    ))}
  </IconGroup>
);

const ToolFace = ({ n }: { n: string }) => {
  if (n === "gradient") return <GradientChip />;
  if (n === "type") return <TypeChip>T</TypeChip>;
  return <Icon n={n} />;
};

export default function App() {
  return (
    <Window>
      <Global />
      <MenuBar>
        <Logo>Ps</Logo>
        <Menus>
          {menus.map((m) => (
            <MenuItem key={m}>{m}</MenuItem>
          ))}
        </Menus>
        <Caption>
          <CaptionButton aria-label="最小化"><Icon n="min" s={12} /></CaptionButton>
          <CaptionButton aria-label="还原"><Icon n="restore" s={12} /></CaptionButton>
          <CaptionButton aria-label="关闭" $wide><Icon n="close" s={10} /></CaptionButton>
        </Caption>
      </MenuBar>

      <OptionsBar>
        <Grip />
        <ToolPreset aria-label="移动工具"><Icon n="move" /><Icon n="down" s={9} /></ToolPreset>
        <CheckLabel><Check type="checkbox" />自动选择：</CheckLabel>
        <Drop w={56} label="自动选择" value="组" />
        <Spacer $w={4} />
        <Divider />
        <CheckLabel><Check type="checkbox" />显示变换控件</CheckLabel>
        <Spacer $w={4} />
        <Divider />
        <Spacer $w={2} />
        <IconRun names={["alTop", "alMid", "alBot"]} />
        <IconRun names={["alLeft", "alCen", "alRight"]} />
        <Divider />
        <IconRun names={["diTop", "diMid", "diBot"]} />
        <IconRun names={["diLeft", "diCen", "diRight"]} />
        <Divider />
        <IconRun names={["arrange"]} />
        <Divider $full />
        3D 模式：
        <IconRun names={["orbit", "roll", "pan", "slide", "camera"]} />
        <Spacer />
        <Drop w={106} label="工作区" value="基本功能" />
      </OptionsBar>

      <Workspace>
        <Tools>
          <ToolsHead><Icon n="ff" s={8} /></ToolsHead>
          <ToolsGrip />
          {toolGroups.map((g, i) => (
            <React.Fragment key={i}>
              {i > 0 && <ToolRule />}
              {g.map((n) => (
                <Tool key={n} $on={n === "move"} aria-label={n}>
                  <ToolFace n={n} />
                  {n !== "move" && n !== "zoom" && <Corner />}
                </Tool>
              ))}
            </React.Fragment>
          ))}
          <MiniRow><Icon n="miniswatch" s={13} /><Icon n="swap" s={11} /></MiniRow>
          <Swatches><Front aria-label="前景色" /><Back aria-label="背景色" /></Swatches>
          <Tool aria-label="快速蒙版"><Icon n="quick" /></Tool>
          <Tool aria-label="屏幕模式"><Icon n="screen" /><Corner /></Tool>
        </Tools>

        <Doc>
          <TabStrip>
            <DocTab>QQ图片20200506230132.jpg @ 100%(RGB/8#)<IconButton aria-label="关闭文档"><Icon n="close" s={6} /></IconButton></DocTab>
          </TabStrip>
          <DocBody>
            <RulerCorner />
            <RulerX>{steps(-450, 1050).map((v) => <StepX key={v}>{Math.abs(v)}</StepX>)}</RulerX>
            <ScrollStrip />
            <RulerY>{steps(-200, 700).map((v) => <StepY key={v}>{Math.abs(v)}</StepY>)}</RulerY>
            <Pasteboard><Drawing /></Pasteboard>
          </DocBody>
          <StatusBar>
            <ZoomField aria-label="缩放" defaultValue="100%" />
            <StatusButton $w={23} aria-label="状态"><Icon n="status" s={12} /></StatusButton>
            <DocSize>文档:1.10M/1.10M</DocSize>
            <StatusButton $w={11} aria-label="更多"><Icon n="play" s={9} /></StatusButton>
          </StatusBar>
          <Floating>
            <TabBar names={["历史记录"]} ff />
            <HistoryBody>
              <Snapshot><Icon n="history" s={15} /><MiniArt />QQ图片20200506230...</Snapshot>
              <HistoryState>打开</HistoryState>
            </HistoryBody>
            <HistoryFoot><Icon n="newdoc" s={14} /><Icon n="snap" s={14} /><Icon n="trash" s={14} /></HistoryFoot>
          </Floating>
        </Doc>

        <Dock>
          <DockHead />
          <DockButton aria-label="历史记录"><Icon n="histPanel" /></DockButton>
          <DockRule />
        </Dock>

        <Panels>
          <DockHead><Icon n="ff" s={9} /></DockHead>
          <Panel $h={267}>
            <TabBar names={["信息"]} />
            <InfoGrid $h={85} $icon={20}>
              <InfoCell>
                <Icon n="dropper" s={14} />
                <Readout rows={[["R", "0"], ["G", "0"], ["B", "0"], [" ", ""]].map(([k, v]) => [k, v] as [string, string]).slice(0, 3)} depth="8 位" />
              </InfoCell>
              <InfoCell>
                <Icon n="dropper" s={14} />
                <Readout rows={[["C", "93%"], ["M", "88%"], ["Y", "89%"], ["K", "80%"]]} depth="8 位" />
              </InfoCell>
            </InfoGrid>
            <InfoGrid $h={35} $icon={10}>
              <InfoCell>
                <Icon n="cross" s={14} />
                <Readout rows={[["X", "332"], ["Y", "240"]]} />
              </InfoCell>
              <InfoCell>
                <Icon n="dims" s={14} />
                <Readout rows={[["W", ""], ["H", ""]]} />
              </InfoCell>
            </InfoGrid>
            <InfoLine>文档:1.10M/1.10M</InfoLine>
            <Hint>点按并拖移以移动图层或选区。要用附加选项，使用 Shift 和 Alt 键。</Hint>
          </Panel>

          <Panel $h={131}>
            <TabBar names={["颜色", "色板"]} />
            <ColorBody>
              <SwatchCol>
                <Swatches><Front aria-label="前景色" /><Back aria-label="背景色" /></Swatches>
                <GamutRow><Icon n="warn" s={13} /><Gamut /></GamutRow>
              </SwatchCol>
              <div>
                {[["R", "#000", "#f01018", 255], ["G", "#f01018", "#f4f420", 3], ["B", "#f01018", "#e818e8", 3]].map(([k, a, b, v]) => (
                  <Channel key={k as string}>
                    <label htmlFor={"ch" + k}>{k}</label>
                    <Slider type="range" aria-label={k + " 滑块"} min={0} max={255} defaultValue={v as number} $from={a as string} $to={b as string} />
                    <Amount id={"ch" + k} defaultValue={v as number} />
                  </Channel>
                ))}
              </div>
            </ColorBody>
            <Spectrum><Hues /><White /><Black /></Spectrum>
          </Panel>

          <Panel $h={132}>
            <TabBar names={["调整", "样式"]} />
            <AdjustTitle>添加调整</AdjustTitle>
            <AdjustRow>{["sun", "levels", "curves", "exposure", "vibrance"].map((n) => <Icon key={n} n={n} />)}</AdjustRow>
            <AdjustRow>{["hue", "balance", "bw", "photo", "mixer", "lookup"].map((n) => <Icon key={n} n={n} />)}</AdjustRow>
            <AdjustRow>{["invert", "poster", "thresh", "selcol"].map((n) => <Icon key={n} n={n} />)}<Chip /></AdjustRow>
          </Panel>

          <Panel>
            <TabBar names={["图层", "通道", "路径"]} />
            <LayerRow>
              <Drop w={70} label="类型" value="类型" dim pad={21} icon="search" />
              <LayerIcons $gap={8} $pad={14}>
                <Icon n="image" s={16} /><Icon n="half" s={16} /><TypeChip>T</TypeChip><Icon n="shape" s={16} /><Icon n="smart" s={16} />
              </LayerIcons>
              <Spacer />
              <Toggle aria-label="滤镜开关" />
            </LayerRow>
            <LayerRow>
              <Drop w={109} label="混合模式" value="正常" dim />
              <Spacer />
              <Percent label="不透明度:" />
            </LayerRow>
            <LayerRow>
              锁定:
              <LayerIcons $gap={8} $pad={6}>
                <Icon n="check" s={13} /><Icon n="brush" s={15} /><Icon n="pan" s={13} /><Icon n="lock" s={13} />
              </LayerIcons>
              <Spacer />
              <Percent label="填充:" />
            </LayerRow>
            <LayerList>
              <Layer>
                <EyeCell><Icon n="eye" s={13} /></EyeCell>
                <MiniArt />
                <LayerName>背景</LayerName>
                <Icon n="lockLine" s={12} />
              </Layer>
            </LayerList>
            <PanelFoot><Icon n="link" s={16} /><Fx>fx</Fx></PanelFoot>
          </Panel>
        </Panels>
      </Workspace>

      <Titles>
        <TitleLine><Word>EasyClick</Word><Gap> </Gap>系列教程图色篇<Colon>(</Colon>1<Colon>)</Colon></TitleLine>
        <TitleLine $before={30}>图色概念及使用思维</TitleLine>
        <TitleLine $before={33}><Word>EasyClick</Word>的<Short>QQ</Short>群<Colon>:</Colon>777164022</TitleLine>
        <TitleLine $before={20}>主讲<Colon>:</Colon>刘百浲<Gap> </Gap><Short>QQ</Short><Colon>:</Colon>50494558</TitleLine>
      </Titles>

      <Ime>
        <ImeMode>五</ImeMode>
        <ImeLang>中</ImeLang>
        <Icon n="moon" s={13} />
        <Icon n="dots" s={13} />
        <Icon n="keyboard" s={15} />
        <Icon n="person" s={13} />
        <Icon n="wrench" s={13} />
      </Ime>
    </Window>
  );
}
